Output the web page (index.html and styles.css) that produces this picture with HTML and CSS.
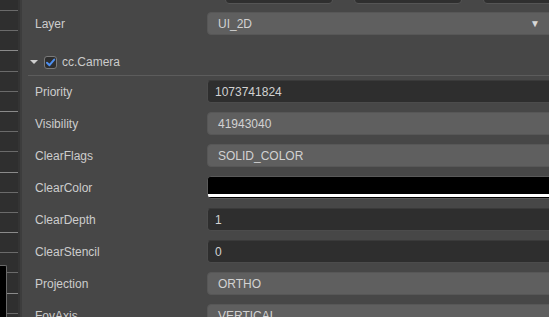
FILE: index.html
```html
<!DOCTYPE html>
<html>
<head>
<meta charset="utf-8">
<link rel="stylesheet" href="styles.css">
</head>
<body>
<div class="side">
  <div class="cells">
    <div class="cell"></div><div class="cell"></div><div class="cell"></div><div class="cell"></div>
    <div class="cell"></div><div class="cell"></div><div class="cell"></div><div class="cell"></div>
    <div class="cell"></div><div class="cell"></div><div class="cell"></div><div class="cell"></div>
    <div class="cell"></div><div class="cell"></div><div class="cell"></div><div class="cell"></div>
  </div>
  <div class="black-box"></div>
</div>
<div class="edge"></div>
<div class="main">
  <div class="toolbar">
    <div class="tbtn"></div><div class="tbtn"></div><div class="tbtn"></div>
  </div>
  <div class="row layer-row">
    <div class="label">Layer</div>
    <div class="field gray select"><span>UI_2D</span><span class="arrow">▼</span></div>
  </div>
  <div class="comp-header">
    <span class="tri"></span>
    <span class="check">
      <svg width="11" height="11" viewBox="0 0 11 11"><path d="M2 5.8 L4.5 8.2 L9.2 2.6" fill="none" stroke="#4d8ff0" stroke-width="2" stroke-linecap="round" stroke-linejoin="round"/></svg>
    </span>
    <span class="comp-title">cc.Camera</span>
  </div>
  <div class="rows">
    <div class="row"><div class="label">Priority</div><div class="field dark">1073741824</div></div>
    <div class="row"><div class="label">Visibility</div><div class="field gray">41943040</div></div>
    <div class="row"><div class="label">ClearFlags</div><div class="field gray">SOLID_COLOR</div></div>
    <div class="row"><div class="label">ClearColor</div><div class="field color"><div class="swatch"></div><div class="alpha"></div></div></div>
    <div class="row"><div class="label">ClearDepth</div><div class="field dark">1</div></div>
    <div class="row"><div class="label">ClearStencil</div><div class="field dark">0</div></div>
    <div class="row"><div class="label">Projection</div><div class="field gray">ORTHO</div></div>
    <div class="row"><div class="label">FovAxis</div><div class="field gray">VERTICAL</div></div>
  </div>
</div>
</body>
</html>
```
FILE: styles.css
```css
html, body {
  margin: 0;
  padding: 0;
  height: 317px;
  overflow: hidden;
  background: #474747;
}
body {
  display: flex;
  font-family: "Liberation Sans", Arial, sans-serif;
  font-size: 12px;
  color: #cbcbcb;
}
.side {
  position: relative;
  width: 18px;
  flex: none;
  background: #2e2e2e;
  overflow: hidden;
}
.cells {
  display: flex;
  flex-direction: column;
  padding-top: 10px;
}
.cell {
  height: 19.2px;
  border-top: 1px solid #6a6a6a;
  flex: none;
  background: #2f2f2f;
}
.cell:nth-child(3n) { border-top-color: #8a8a8a; }
.black-box {
  position: absolute;
  left: 0;
  top: 265px;
  width: 6px;
  height: 60px;
  background: #000;
  border-right: 1px solid #6a6a6a;
  border-top: 1px solid #6a6a6a;
  border-top-right-radius: 2px;
}
.edge {
  width: 4px;
  flex: none;
  border-left: 2px solid #343434;
  background: #3d3d3d;
  box-sizing: border-box;
}
.main {
  flex: 1;
  min-width: 0;
  overflow: hidden;
  display: flex;
  flex-direction: column;
}
.toolbar {
  height: 4px;
  display: flex;
  align-items: flex-end;
  gap: 21px;
  padding-left: 203px;
  overflow: hidden;
  flex: none;
}
.tbtn {
  width: 106px;
  height: 20px;
  flex: none;
  background: #2f2f2f;
  border: 1px solid #555;
  border-radius: 4px;
}
.row {
  display: flex;
  align-items: center;
  height: 23px;
  flex: none;
}
.layer-row {
  margin-top: 8px;
}
.label {
  width: 185px;
  padding-left: 13px;
  box-sizing: border-box;
  flex: none;
  color: #cdcdcd;
}
.field {
  flex: 1;
  height: 23px;
  box-sizing: border-box;
  margin-right: -10px;
  border-radius: 4px;
  display: flex;
  align-items: center;
  color: #d2d2d2;
}
.gray {
  background: #5f5f5f;
  padding-left: 10px;
  border: 1px solid #575757;
}
.dark {
  background: #2e2e2e;
  padding-left: 7px;
  border: 1px solid #4c4c4c;
  border-top-color: #3a3a3a;
}
.select {
  justify-content: space-between;
  padding-right: 18px;
}
.arrow {
  font-size: 10px;
  color: #d8d8d8;
}
.color {
  flex-direction: column;
  align-items: stretch;
  height: 23px;
  border: 1px solid #5a5a5a;
  background: #000;
  overflow: hidden;
}
.swatch {
  flex: 1;
  background: #000;
}
.alpha {
  height: 3px;
  background: #fff;
  margin-bottom: 1px;
}
.comp-header {
  margin: 14px 0 0 6px;
  height: 26px;
  flex: none;
  display: flex;
  align-items: center;
  border-bottom: 1px solid #5c5c5c;
}
.tri {
  width: 0;
  height: 0;
  margin-left: 2px;
  border-left: 4px solid transparent;
  border-right: 4px solid transparent;
  border-top: 4px solid #cfcfcf;
}
.check {
  margin-left: 6px;
  width: 13px;
  height: 13px;
  box-sizing: border-box;
  border: 1px solid #7a7a7a;
  border-radius: 3px;
  background: #2e2e2e;
  display: flex;
  align-items: center;
  justify-content: center;
}
.comp-title {
  margin-left: 5px;
  color: #cbcbcb;
}
.rows {
  margin-top: 4px;
  display: flex;
  flex-direction: column;
  gap: 9px;
}
```
